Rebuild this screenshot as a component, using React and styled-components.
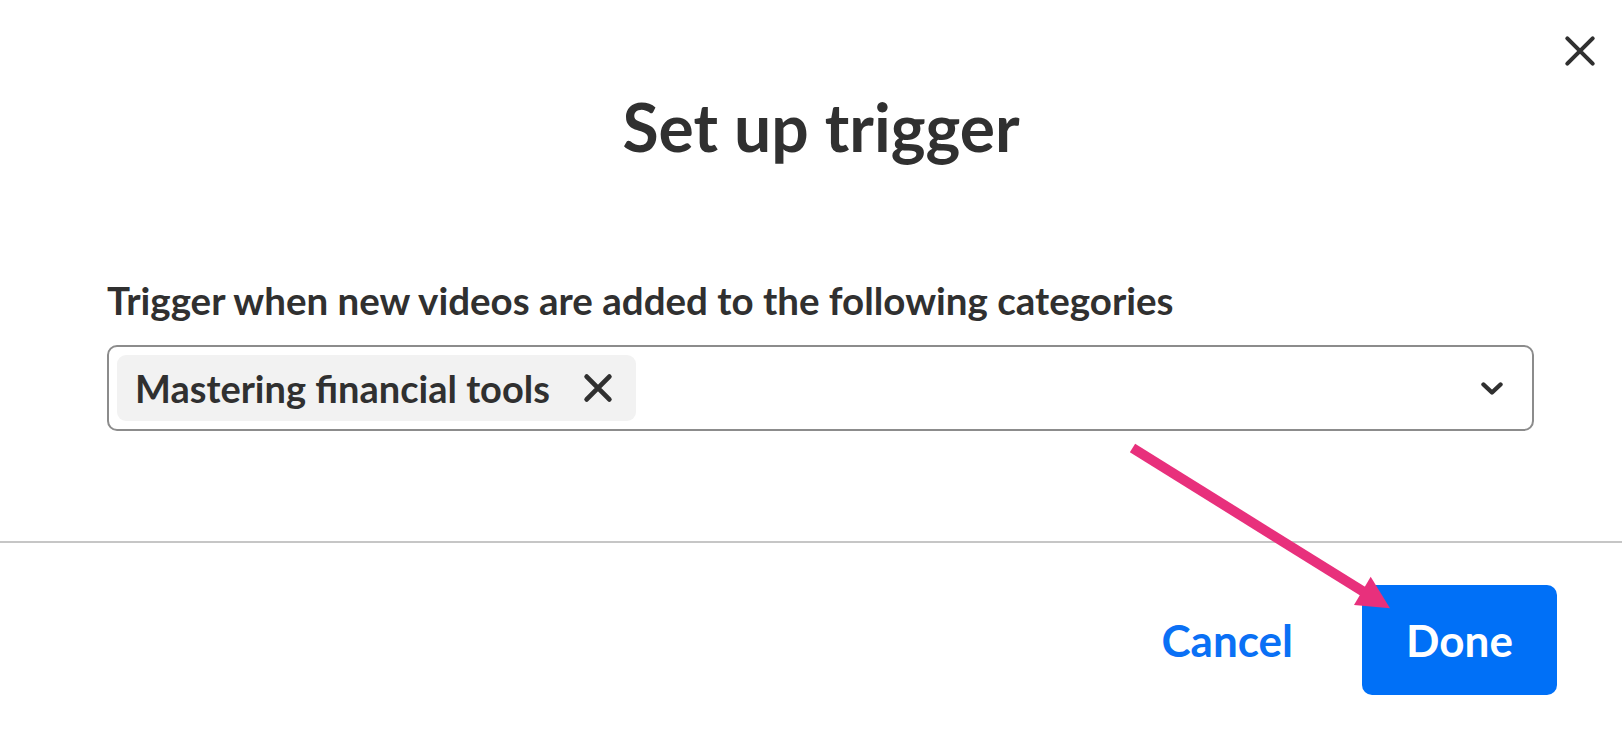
import React from "react";
import styled, { createGlobalStyle } from "styled-components";

const Global = createGlobalStyle`
  html, body { margin: 0; padding: 0; background: #ffffff; }
  body { font-family: Lato, "Noto Sans", sans-serif; color: #303030; }
  * { box-sizing: border-box; }
`;

const Modal = styled.div`
  position: relative;
  width: 1622px;
  height: 730px;
  background: #fff;
  display: flex;
  flex-direction: column;
  overflow: hidden;
`;

const Header = styled.header`
  display: flex;
  justify-content: center;
  padding: 88px 0 0 20px;
`;

const Title = styled.h1`
  margin: 0;
  font-size: 66px;
  line-height: 78px;
  font-weight: 700;
  color: #303030;
`;

const CloseButton = styled.button`
  position: absolute;
  top: 31px;
  right: 22px;
  width: 40px;
  height: 40px;
  padding: 0;
  border: 0;
  background: transparent;
  display: flex;
  align-items: center;
  justify-content: center;
  color: #303030;
  cursor: pointer;
`;

const Body = styled.section`
  display: flex;
  flex-direction: column;
  padding: 111px 88px 0 107px;
`;

const Label = styled.label`
  font-size: 38.5px;
  line-height: 46px;
  font-weight: 700;
  color: #303030;
  margin-bottom: 22px;
`;

const SelectBox = styled.div`
  height: 86px;
  border: 2px solid #8c8c8c;
  border-radius: 10px;
  display: flex;
  align-items: center;
  padding: 0 29px 0 8px;
`;

const Chip = styled.div`
  height: 66px;
  display: flex;
  align-items: center;
  gap: 31px;
  padding: 0 21px 0 18px;
  background: #f2f2f2;
  border-radius: 9px;
  font-size: 38px;
  font-weight: 700;
  color: #303030;
`;

const ChipRemove = styled.span`
  display: flex;
  color: #303030;
`;

const Spacer = styled.div`
  flex: 1;
`;

const Chevron = styled.span`
  display: flex;
  color: #303030;
`;

const Divider = styled.hr`
  margin: 110px 0 0;
  border: 0;
  height: 2px;
  background: #c6c6c6;
`;

const Footer = styled.footer`
  display: flex;
  justify-content: flex-end;
  align-items: center;
  gap: 69px;
  padding: 42px 65px 0 0;
`;

const TextButton = styled.button`
  border: 0;
  background: transparent;
  padding: 0;
  font-family: Lato, "Noto Sans", sans-serif;
  font-size: 44px;
  font-weight: 700;
  color: #0a70f5;
  cursor: pointer;
`;

const PrimaryButton = styled.button`
  width: 195px;
  height: 110px;
  border: 0;
  border-radius: 10px;
  background: #0070f7;
  color: #fff;
  font-family: Lato, "Noto Sans", sans-serif;
  font-size: 44px;
  font-weight: 700;
  cursor: pointer;
`;

const ArrowOverlay = styled.svg`
  position: absolute;
  left: 0;
  top: 0;
  pointer-events: none;
`;

const XIcon = ({ size, stroke }) => (
  <svg width={size} height={size} viewBox="0 0 24 24" fill="none">
    <path d="M4 4L20 20M20 4L4 20" stroke="currentColor" strokeWidth={stroke} strokeLinecap="round" />
  </svg>
);

export default function App() {
  return (
    <>
      <Global />
      <Modal>
        <Header>
          <Title>Set up trigger</Title>
        </Header>
        <CloseButton aria-label="Close">
          <XIcon size={38} stroke={2.6} />
        </CloseButton>
        <Body>
          <Label>Trigger when new videos are added to the following categories</Label>
          <SelectBox>
            <Chip>
              Mastering financial tools
              <ChipRemove>
                <XIcon size={34} stroke={3.4} />
              </ChipRemove>
            </Chip>
            <Spacer />
            <Chevron>
              <svg width="22" height="15" viewBox="0 0 22 15" fill="none">
                <path d="M2.5 3.5L11 11.5L19.5 3.5" stroke="currentColor" strokeWidth="4.4" strokeLinecap="round" strokeLinejoin="round" />
              </svg>
            </Chevron>
          </SelectBox>
        </Body>
        <Divider />
        <Footer>
          <TextButton>Cancel</TextButton>
          <PrimaryButton>Done</PrimaryButton>
        </Footer>
        <ArrowOverlay width="1622" height="730" viewBox="0 0 1622 730">
          <line x1="1132.5" y1="448" x2="1364" y2="592" stroke="#e8307c" strokeWidth="10" />
          <polygon points="1370.7,576.7 1354,605 1390,608.3" fill="#e8307c" />
        </ArrowOverlay>
      </Modal>
    </>
  );
}
